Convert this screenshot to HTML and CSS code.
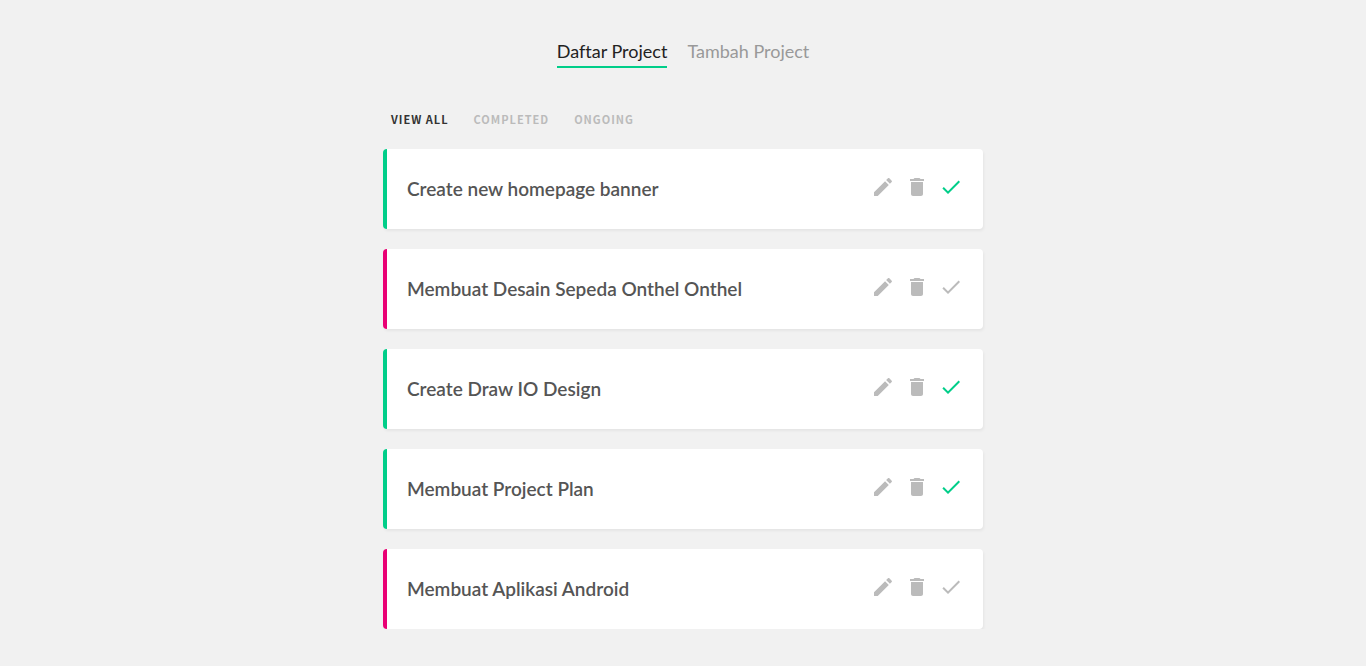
FILE: index.html
```
<!DOCTYPE html>
<html lang="id">
<head>
<meta charset="utf-8">
<meta name="viewport" content="width=device-width, initial-scale=1">
<title>Daftar Project</title>
<link rel="stylesheet" href="styles.css">
</head>
<body>
<svg class="sprite" aria-hidden="true">
  <symbol id="edit" viewBox="0 0 24 24"><path d="M3 17.25V21h3.75L17.81 9.94l-3.75-3.75L3 17.25zM20.71 7.04c.39-.39.39-1.02 0-1.41l-2.34-2.34c-.39-.39-1.02-.39-1.41 0l-1.83 1.83 3.75 3.75 1.83-1.83z"/></symbol>
  <symbol id="trash" viewBox="0 0 24 24"><path d="M6 19c0 1.1.9 2 2 2h8c1.1 0 2-.9 2-2V7H6v12zM19 4h-3.5l-1-1h-5l-1 1H5v2h14V4z"/></symbol>
  <symbol id="done" viewBox="0 0 24 24"><path d="M9 16.2L4.8 12l-1.4 1.4L9 19 21 7l-1.4-1.4L9 16.2z"/></symbol>
</svg>
<div class="app">
  <nav class="main-nav">
    <a class="main-link active" href="#list">Daftar Project</a>
    <a class="main-link" href="#add">Tambah Project</a>
  </nav>
  <nav class="filters">
    <button class="filter active" type="button">View all</button>
    <button class="filter" type="button">Completed</button>
    <button class="filter" type="button">Ongoing</button>
  </nav>
  <main class="projects">
    <article class="project complete">
      <h3 class="title">Create new homepage banner</h3>
      <div class="actions">
        <button class="icon" type="button" aria-label="Edit"><svg><use href="#edit"/></svg></button>
        <button class="icon" type="button" aria-label="Delete"><svg><use href="#trash"/></svg></button>
        <button class="icon tick" type="button" aria-label="Done"><svg><use href="#done"/></svg></button>
      </div>
    </article>
    <article class="project">
      <h3 class="title">Membuat Desain Sepeda Onthel Onthel</h3>
      <div class="actions">
        <button class="icon" type="button" aria-label="Edit"><svg><use href="#edit"/></svg></button>
        <button class="icon" type="button" aria-label="Delete"><svg><use href="#trash"/></svg></button>
        <button class="icon tick" type="button" aria-label="Done"><svg><use href="#done"/></svg></button>
      </div>
    </article>
    <article class="project complete">
      <h3 class="title">Create Draw IO Design</h3>
      <div class="actions">
        <button class="icon" type="button" aria-label="Edit"><svg><use href="#edit"/></svg></button>
        <button class="icon" type="button" aria-label="Delete"><svg><use href="#trash"/></svg></button>
        <button class="icon tick" type="button" aria-label="Done"><svg><use href="#done"/></svg></button>
      </div>
    </article>
    <article class="project complete">
      <h3 class="title">Membuat Project Plan</h3>
      <div class="actions">
        <button class="icon" type="button" aria-label="Edit"><svg><use href="#edit"/></svg></button>
        <button class="icon" type="button" aria-label="Delete"><svg><use href="#trash"/></svg></button>
        <button class="icon tick" type="button" aria-label="Done"><svg><use href="#done"/></svg></button>
      </div>
    </article>
    <article class="project">
      <h3 class="title">Membuat Aplikasi Android</h3>
      <div class="actions">
        <button class="icon" type="button" aria-label="Edit"><svg><use href="#edit"/></svg></button>
        <button class="icon" type="button" aria-label="Delete"><svg><use href="#trash"/></svg></button>
        <button class="icon tick" type="button" aria-label="Done"><svg><use href="#done"/></svg></button>
      </div>
    </article>
  </main>
</div>
</body>
</html>
```
FILE: styles.css
```
* { box-sizing: border-box; }
body {
  margin: 0;
  background: #f1f1f1;
  font-family: Lato, sans-serif;
  font-variant-ligatures: none;
}
.sprite { position: absolute; width: 0; height: 0; }
.app { max-width: 600px; margin: 0 auto; padding-top: 40px; }
.main-nav { display: flex; justify-content: center; gap: 20px; }
.main-link {
  padding-bottom: 4px;
  border-bottom: 2px solid transparent;
  color: #999;
  font-size: 18px;
  line-height: 22px;
  text-decoration: none;
}
.main-link.active { color: #222; border-color: #00ce89; }
.filters { display: flex; gap: 25px; padding: 43px 8px 22px; }
.filter {
  padding: 0;
  border: 0;
  background: none;
  color: #bbb;
  font: 700 11px/16px "Noto Sans CJK JP", sans-serif;
  letter-spacing: 1px;
  text-transform: uppercase;
  cursor: pointer;
}
.filter.active { color: #333; }
.projects { display: grid; gap: 20px; }
.project {
  display: flex;
  align-items: center;
  justify-content: space-between;
  padding: 20px;
  border-left: 4px solid #e90074;
  border-radius: 4px;
  background: #fff;
  box-shadow: 1px 2px 3px rgba(0, 0, 0, 0.05);
}
.project.complete { border-color: #00ce89; }
.title { margin: 0; color: #555; font-size: 19px; line-height: 40px; font-weight: 600; }
.actions { display: flex; gap: 10px; padding-bottom: 4px; }
.icon { padding: 0; border: 0; background: none; color: #bbb; cursor: pointer; }
.icon svg { display: block; width: 24px; height: 24px; fill: currentColor; }
.complete .tick { color: #00ce89; }
```
